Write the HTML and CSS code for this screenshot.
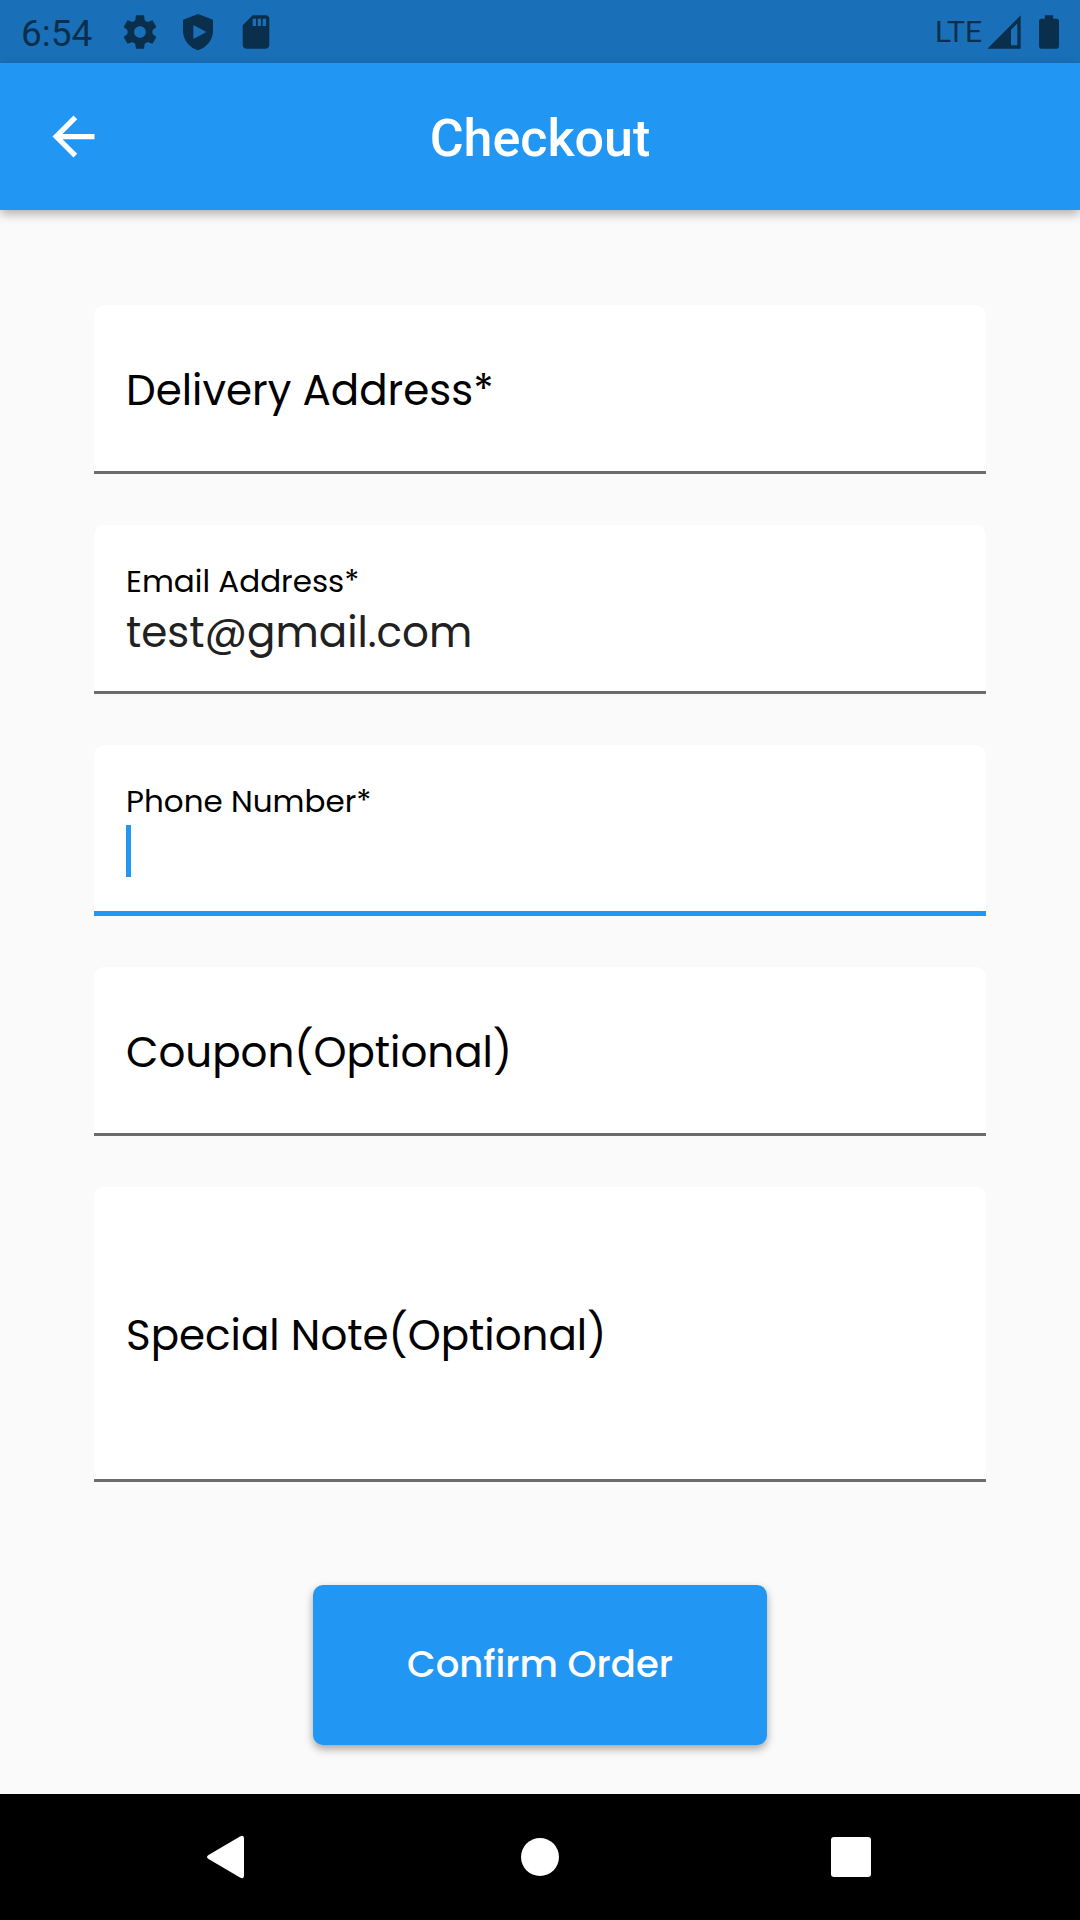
FILE: index.html
```html
<!DOCTYPE html>
<html lang="en">
<head>
<meta charset="utf-8">
<meta name="viewport" content="width=device-width, initial-scale=1">
<title>Checkout</title>
<link rel="stylesheet" href="styles.css">
</head>
<body>
<div class="screen">
  <div class="status-bar">
    <div class="status-left">
      <span class="clock">6:54</span>
      <svg class="status-icon" viewBox="0 0 24 24" aria-hidden="true"><path d="M19.43 12.98c.04-.32.07-.64.07-.98s-.03-.66-.07-.98l2.11-1.65c.19-.15.24-.42.12-.64l-2-3.46c-.12-.22-.39-.3-.61-.22l-2.49 1c-.52-.4-1.08-.73-1.69-.98l-.38-2.65C14.46 2.18 14.25 2 14 2h-4c-.25 0-.46.18-.49.42l-.38 2.65c-.61.25-1.17.59-1.69.98l-2.49-1c-.23-.09-.49 0-.61.22l-2 3.46c-.13.22-.07.49.12.64l2.11 1.65c-.04.32-.07.65-.07.98s.03.66.07.98l-2.11 1.65c-.19.15-.24.42-.12.64l2 3.46c.12.22.39.3.61.22l2.49-1c.52.4 1.08.73 1.69.98l.38 2.65c.03.24.24.42.49.42h4c.25 0 .46-.18.49-.42l.38-2.65c.61-.25 1.17-.59 1.69-.98l2.49 1c.23.09.49 0 .61-.22l2-3.46c.12-.22.07-.49-.12-.64l-2.11-1.65zM12 15.5c-1.93 0-3.5-1.57-3.5-3.5s1.57-3.5 3.5-3.5 3.5 1.57 3.5 3.5-1.57 3.5-3.5 3.5z"/></svg>
      <svg class="status-icon" viewBox="0 0 24 24" aria-hidden="true"><path fill-rule="evenodd" d="M12 1.200L3 4.700v6.500c0 5.600 3.800 10 9 11.800 5.200-1.800 9-6.200 9-11.800V4.700zM9.200 7.800l7.800 4.200-7.800 4.200z"/></svg>
      <svg class="status-icon" viewBox="0 0 24 24" aria-hidden="true"><path fill-rule="evenodd" d="M18 2h-8L4 8v12c0 1.100.9 2 2 2h12c1.100 0 2-.9 2-2V4c0-1.100-.9-2-2-2zM10 4h2v4.400h-2zm3 0h2v4.400h-2zm3 0h2v4.400h-2z"/></svg>
    </div>
    <div class="status-right">
      <span class="network">LTE</span>
      <svg class="status-icon" viewBox="0 0 24 24" aria-hidden="true"><path fill-rule="evenodd" d="M2 22h20V2zm14.200-2V10.700L20 6.900V20z"/></svg>
      <svg class="status-icon" viewBox="0 0 24 24" aria-hidden="true"><path d="M16.700 4H14.500V2h-5v2H7.300C6.600 4 6 4.600 6 5.300v15.400C6 21.400 6.600 22 7.300 22h9.400c.7 0 1.300-.6 1.300-1.300V5.300C18 4.600 17.400 4 16.700 4z"/></svg>
    </div>
  </div>

  <header class="app-bar">
    <button class="back" type="button" aria-label="Back">
      <svg viewBox="0 0 24 24" aria-hidden="true"><path d="M20 11H7.830l5.590-5.590L12 4l-8 8 8 8 1.410-1.410L7.830 13H20z"/></svg>
    </button>
    <h1 class="title">Checkout</h1>
  </header>

  <main class="content">
    <form class="form">
      <div class="field">
        <label class="label" for="address">Delivery Address*</label>
        <input class="input" id="address" type="text">
      </div>
      <div class="field field-filled">
        <label class="label" for="email">Email Address*</label>
        <input class="input" id="email" type="email" value="test@gmail.com">
      </div>
      <div class="field field-filled field-active">
        <label class="label" for="phone">Phone Number*</label>
        <input class="input" id="phone" type="tel">
        <span class="caret"></span>
      </div>
      <div class="field">
        <label class="label" for="coupon">Coupon(Optional)</label>
        <input class="input" id="coupon" type="text">
      </div>
      <div class="field field-tall">
        <label class="label" for="note">Special Note(Optional)</label>
        <textarea class="input" id="note"></textarea>
      </div>
      <button class="confirm" type="button">Confirm Order</button>
    </form>
  </main>

  <nav class="nav-bar">
    <button class="nav-button" type="button" aria-label="Back">
      <svg viewBox="0 0 48 48" aria-hidden="true"><path d="M3.500 22L35 3.500q4-2 4 2v37q0 4-4 2L3.500 26q-3-2 0-4z"/></svg>
    </button>
    <button class="nav-button" type="button" aria-label="Home">
      <svg viewBox="0 0 48 48" aria-hidden="true"><circle cx="24" cy="24" r="19"/></svg>
    </button>
    <button class="nav-button" type="button" aria-label="Recent apps">
      <svg viewBox="0 0 48 48" aria-hidden="true"><rect x="4" y="4" width="40" height="40" rx="3"/></svg>
    </button>
  </nav>
</div>
</body>
</html>
```
FILE: styles.css
```css
* {
  box-sizing: border-box;
}

body {
  margin: 0;
  background: #fafafa;
  font-family: Poppins, Inter, "Noto Sans", sans-serif;
  color: #000;
}

button {
  margin: 0;
  padding: 0;
  border: 0;
  background: none;
  font: inherit;
  color: inherit;
}

svg {
  display: block;
  fill: currentColor;
}

.screen {
  display: flex;
  flex-direction: column;
  min-height: 100vh;
}

/* System status bar */
.status-bar {
  display: flex;
  justify-content: space-between;
  align-items: center;
  height: 63px;
  padding: 0 11px 0 21px;
  background: #1a70b8;
  color: #0a2f4c;
  font-family: Roboto, sans-serif;
}

.status-left {
  display: flex;
  align-items: center;
  gap: 18px;
}

.status-right {
  display: flex;
  align-items: center;
  gap: 5px;
}

.clock {
  margin-right: 10px;
  padding-top: 4px;
  font-size: 37px;
  line-height: 56px;
}

.network {
  margin-right: -3px;
  font-size: 30px;
  line-height: 60px;
}

.status-icon {
  width: 40px;
  height: 40px;
}

/* App bar */
.app-bar {
  display: grid;
  grid-template-columns: 147px 1fr 147px;
  align-items: center;
  height: 147px;
  background: #2196f3;
  color: #fff;
  box-shadow: 0 4px 10px rgba(0, 0, 0, 0.3);
}

.back {
  justify-self: center;
}

.back svg {
  width: 63px;
  height: 63px;
}

.title {
  margin: 0;
  padding-top: 4px;
  text-align: center;
  font-family: Roboto, sans-serif;
  font-size: 52px;
  font-weight: 500;
  line-height: 64px;
}

/* Form */
.content {
  flex: 1;
  padding: 95px 94px 49px;
}

.form {
  display: flex;
  flex-direction: column;
  gap: 51px;
}

.field {
  display: grid;
  align-items: center;
  min-height: 169px;
  border-bottom: 3px solid #6b6b6b;
  border-radius: 10px 10px 0 0;
  background: #fff;
}

.label {
  grid-area: 1 / 1;
  padding: 6px 32px 0;
  font-size: 42px;
  line-height: 52px;
  pointer-events: none;
}

.input {
  grid-area: 1 / 1;
  align-self: stretch;
  width: 100%;
  margin: 0;
  padding: 4px 32px 0;
  border: 0;
  outline: 0;
  resize: none;
  background: transparent;
  color: #212121;
  caret-color: #2196f3;
  font-family: inherit;
  font-size: 42px;
  line-height: 52px;
}

.field-filled {
  grid-template-rows: 40px 56px;
  align-content: start;
  row-gap: 2px;
  padding-top: 36px;
}

.field-filled .label {
  padding-top: 0;
  font-size: 31px;
  line-height: 40px;
}

.field-filled .input {
  grid-area: 2 / 1;
}

.field-active {
  min-height: 171px;
  border-bottom: 5px solid #2196f3;
}

.caret {
  grid-area: 2 / 1;
  width: 5px;
  height: 52px;
  margin-left: 32px;
  background: #2196f3;
}

.field-tall {
  min-height: 295px;
}

.confirm {
  align-self: center;
  margin-top: 52px;
  padding: 53px 94px 55px;
  border-radius: 10px;
  background: #2196f3;
  color: #fff;
  font-size: 37px;
  font-weight: 500;
  line-height: 52px;
  box-shadow: 0 4px 8px rgba(0, 0, 0, 0.35);
}

/* System navigation */
.nav-bar {
  display: grid;
  grid-template-columns: repeat(3, 1fr);
  justify-items: center;
  align-items: center;
  height: 126px;
  padding: 0 73px;
  background: #000;
  color: #fff;
}

.nav-button svg {
  width: 48px;
  height: 48px;
}
```
